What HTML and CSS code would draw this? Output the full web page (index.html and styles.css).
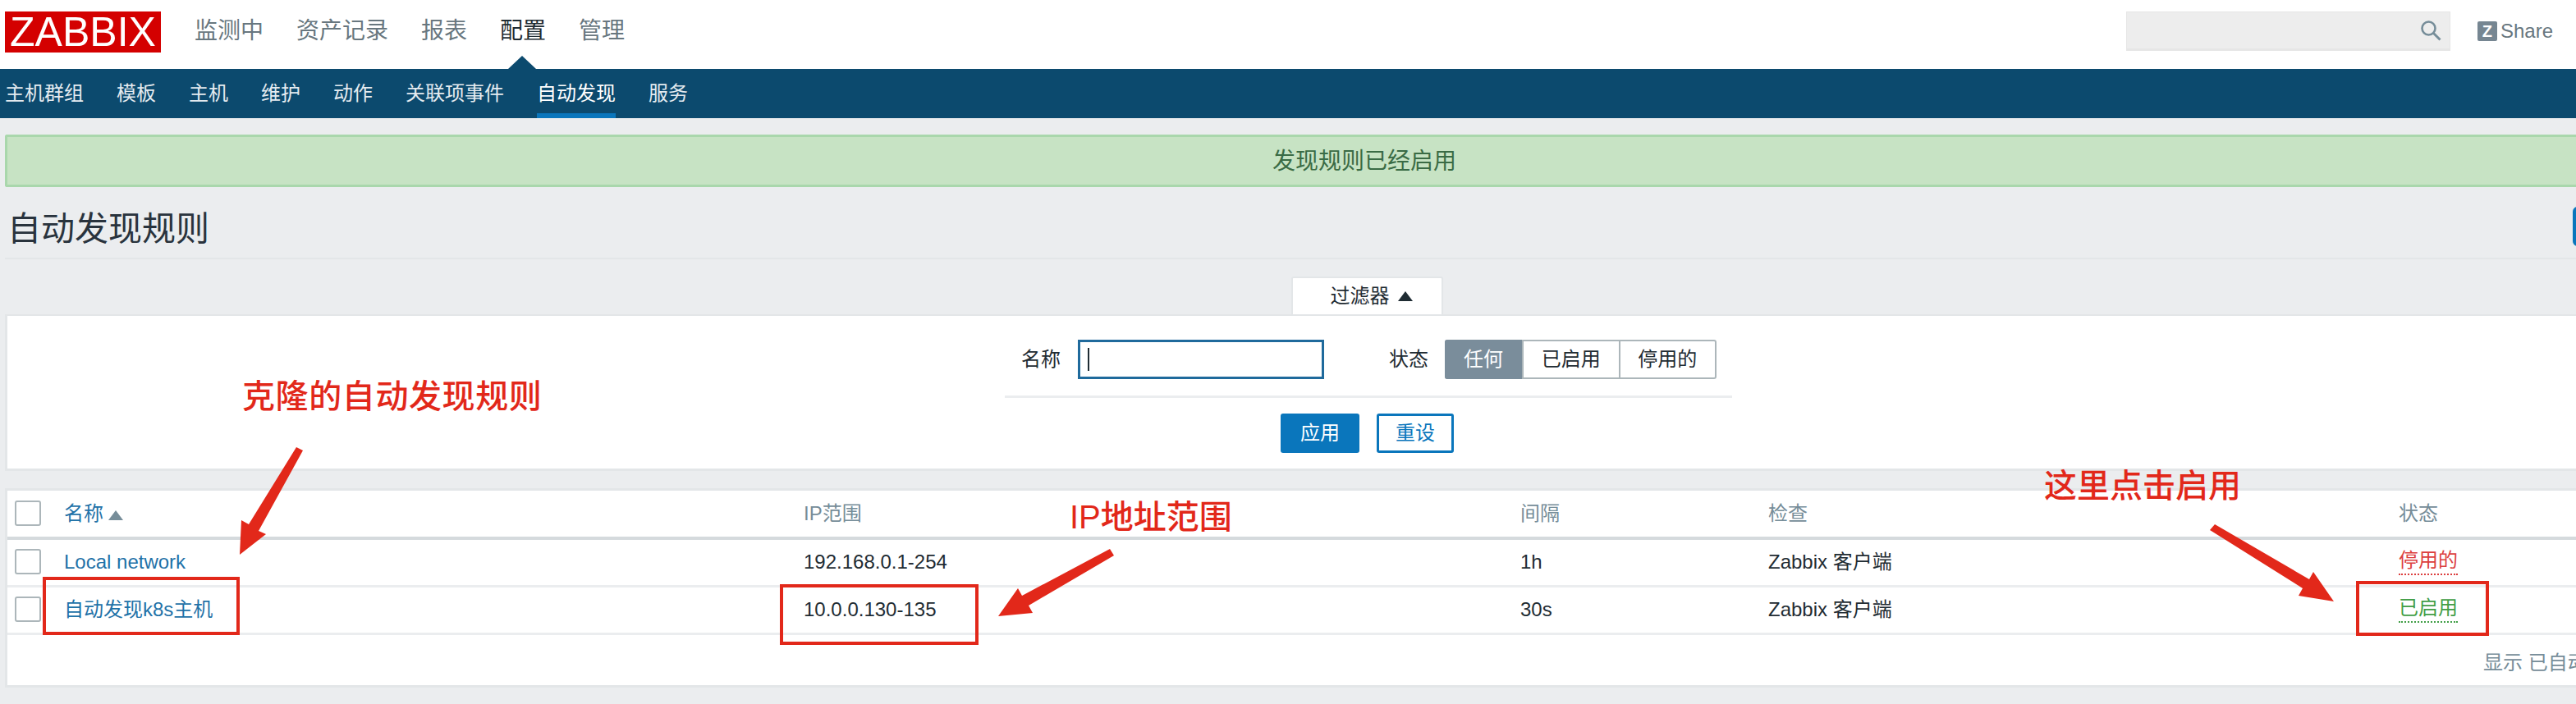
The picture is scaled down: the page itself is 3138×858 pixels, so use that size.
FILE: index.html
```html
<!DOCTYPE html>
<html lang="zh">
<head>
<meta charset="utf-8">
<title>自动发现规则</title>
<link rel="stylesheet" href="styles.css">
</head>
<body>
<header class="topbar">
  <div class="logo">ZABBIX</div>
  <nav class="topnav">
    <a>监测中</a><a>资产记录</a><a>报表</a><a class="on">配置</a><a>管理</a>
  </nav>
  <div class="search">
    <svg class="search-ico" width="26" height="26" viewBox="0 0 26 26"><circle cx="10.5" cy="10.5" r="8" fill="none" stroke="#768d99" stroke-width="2.6"/><path d="M16.5 16.5L24.5 24.5" stroke="#768d99" stroke-width="3"/></svg>
  </div>
  <a class="share"><span class="zmark">Z</span>Share</a>
</header>
<nav class="subnav">
  <a>主机群组</a><a>模板</a><a>主机</a><a>维护</a><a>动作</a><a>关联项事件</a><a class="on">自动发现</a><a>服务</a>
</nav>
<main class="main">
  <div class="msg">发现规则已经启用</div>
  <div class="titlebar">
    <h1>自动发现规则</h1>
    <span class="create"></span>
  </div>
  <div class="tabrow"><div class="tab">过滤器<span class="tri"></span></div></div>
  <section class="filter">
    <div class="frow">
      <label class="flabel">名称</label>
      <div class="finput"><span class="caret"></span></div>
      <label class="flabel second">状态</label>
      <div class="seg"><span class="sel">任何</span><span>已启用</span><span>停用的</span></div>
    </div>
    <div class="fbtns"><button class="btn primary">应用</button><button class="btn ghost">重设</button></div>
  </section>
  <section class="list">
    <table>
      <colgroup><col class="c0"><col class="c1"><col class="c2"><col class="c3"><col class="c4"><col class="c5"></colgroup>
      <thead>
        <tr><th><span class="cb"></span></th><th><a class="link">名称</a><span class="sort"></span></th><th>IP范围</th><th>间隔</th><th>检查</th><th>状态</th></tr>
      </thead>
      <tbody>
        <tr><td><span class="cb"></span></td><td><a class="link">Local network</a></td><td>192.168.0.1-254</td><td>1h</td><td>Zabbix 客户端</td><td><a class="st off">停用的</a></td></tr>
        <tr><td><span class="cb"></span></td><td><a class="link">自动发现k8s主机</a></td><td>10.0.0.130-135</td><td>30s</td><td>Zabbix 客户端</td><td><a class="st ok">已启用</a></td></tr>
      </tbody>
    </table>
    <div class="foot">显示 已自动发现 2 中的 2</div>
  </section>
</main>
<div class="notes">
  <svg class="notes-svg" width="3138" height="858" viewBox="0 0 3138 858">
    <g fill="#e2281a">
      <polygon points="361,545 369,549 315,647 324,651 292,676 294,634 303,639"/>
      <polygon points="1352,669 1357,677 1253,738 1258,747 1216,751 1240,717 1245,726"/>
      <polygon points="2692,646 2698,639 2813,706 2818,697 2843,733 2800,726 2805,717"/>
    </g>
    <g fill="none" stroke="#e2281a" stroke-width="4">
      <rect x="54" y="705" width="236" height="67"/>
      <rect x="952" y="714" width="238" height="70"/>
      <rect x="2872" y="710" width="158" height="63"/>
    </g>
  </svg>
  <div class="note n1">克隆的自动发现规则</div>
  <div class="note n2">IP地址范围</div>
  <div class="note n3">这里点击启用</div>
</div>
</body>
</html>
```
FILE: styles.css
```css
* { box-sizing: border-box; }
html, body { margin: 0; height: 858px; overflow: hidden; }
body {
  position: relative;
  width: 3138px;
  background: #ebedef;
  color: #1f2c33;
  font: 24px/1.2 "Liberation Sans", "Noto Sans CJK SC", sans-serif;
}
a { color: inherit; text-decoration: none; }

.topbar {
  display: flex;
  align-items: center;
  height: 84px;
  background: #fff;
  padding: 0 28px 0 6px;
}
.logo {
  width: 190px;
  height: 50px;
  margin-bottom: 6px;
  background: #d40000;
  color: #fff;
  font-size: 50px;
  line-height: 50px;
  text-align: center;
}
.topnav { display: flex; gap: 40px; margin: 0 0 8px 41px; font-size: 28px; color: #68777f; }
.topnav .on { position: relative; color: #1f2c33; }
.topnav .on::after {
  content: "";
  position: absolute;
  left: 10px;
  top: 47px;
  border: 17px solid transparent;
  border-top: 0;
  border-bottom: 16px solid #0c4a6e;
}
.search {
  display: flex;
  align-items: center;
  justify-content: flex-end;
  width: 395px;
  height: 48px;
  margin: 0 0 8px auto;
  padding-right: 10px;
  background: #ededed;
  border: 1px solid #e6e6e6;
  border-bottom-width: 3px;
}
.search-ico { display: block; }
.share { display: flex; align-items: center; margin: 0 0 8px 33px; color: #68777f; }
.zmark {
  width: 24px;
  height: 24px;
  margin-right: 4px;
  border-radius: 2px;
  background: #768692;
  color: #fff;
  font-weight: 700;
  font-size: 20px;
  line-height: 24px;
  text-align: center;
}

.subnav {
  display: flex;
  gap: 40px;
  height: 60px;
  padding-left: 6px;
  background: #0c4a6e;
  color: #e4ebf0;
}
.subnav a { line-height: 60px; height: 60px; }
.subnav .on { color: #fff; border-bottom: 6px solid #0a76bc; }

.main { width: 3400px; padding: 20px 0 0 6px; }
.msg {
  height: 64px;
  background: #c7e3c4;
  border: solid #a9d7ac;
  border-width: 3px 0 3px 3px;
  border-radius: 3px 0 0 3px;
  color: #3a6b45;
  font-size: 28px;
  line-height: 60px;
  padding-left: 1541px;
}
.titlebar {
  display: flex;
  justify-content: space-between;
  height: 88px;
  border-bottom: 2px solid #e3e6e8;
  padding: 27px 0 0;
}
.titlebar h1 { margin: 0; font-size: 41px; line-height: 48px; font-weight: 400; padding-left: 3px; color: #29333d; }
.create { width: 266px; height: 48px; margin-top: -3px; border-radius: 6px 0 0 6px; background: #0a76bc; }
.tabrow { display: flex; padding: 21px 0 0 1567px; }
.tab {
  display: flex;
  align-items: center;
  justify-content: center;
  width: 185px;
  height: 46px;
  padding-left: 10px;
  background: #fff;
  border: solid #e3e6e8;
  border-width: 2px 2px 0;
  border-radius: 3px 3px 0 0;
}
.tri {
  margin-left: 10px;
  border: 9px solid transparent;
  border-top: 0;
  border-bottom: 12px solid #1f2c33;
}
.filter {
  height: 191px;
  background: #fff;
  border: solid #e3e6e8;
  border-width: 2px 0 3px 3px;
  padding-top: 29px;
}
.frow {
  display: flex;
  align-items: center;
  width: 886px;
  height: 71px;
  margin-left: 1215px;
  padding: 0 0 20px 20px;
  border-bottom: 3px solid #ebedef;
}
.flabel { margin-right: 21px; }
.flabel.second { margin: 0 20px 0 79px; }
.finput {
  display: flex;
  align-items: center;
  width: 300px;
  height: 48px;
  padding-left: 9px;
  border: 3px solid #1f6a9c;
}
.caret { width: 2px; height: 28px; background: #1f2c33; }
.seg {
  display: flex;
  width: 331px;
  height: 48px;
  border: 2px solid #acb6ba;
  border-radius: 3px;
}
.seg span { flex: 1 1 0; text-align: center; line-height: 44px; border-left: 2px solid #acb6ba; }
.seg span:first-child { border-left: 0; flex: 0 0 94px; }
.seg .sel { margin: -2px 0 -2px -2px; line-height: 48px; background: #7a8d9b; color: #fff; border-radius: 3px 0 0 3px; flex: 0 0 96px; }
.fbtns { display: flex; gap: 21px; margin: 19px 0 0 1551px; }
.btn {
  width: 96px;
  height: 48px;
  padding: 0;
  border-radius: 3px;
  font: inherit;
}
.btn.primary { background: #0a76bc; border: 0; color: #fff; }
.btn.ghost { width: 94px; background: #fff; border: 3px solid #0a76bc; color: #0a76bc; }

.list {
  height: 243px;
  margin-top: 21px;
  background: #fff;
  border: solid #e3e6e8;
  border-width: 3px 0 3px 3px;
}
table { border-collapse: collapse; table-layout: fixed; width: 3391px; }
.c0 { width: 69px; } .c1 { width: 901px; } .c2 { width: 873px; } .c3 { width: 302px; } .c4 { width: 768px; } .c5 { width: 478px; }
th, td { padding: 0; text-align: left; font-weight: 400; }
th { height: 58px; color: #768d99; border-bottom: 4px solid #d5dadd; }
td { height: 58px; border-bottom: 3px solid #ebedef; }
.cb {
  display: block;
  width: 32px;
  height: 31px;
  margin: 0 0 2px 9px;
  background: #fff;
  border: 2px solid #acb6ba;
  border-radius: 3px;
}
.link { color: #1f72a8; }
.sort {
  display: inline-block;
  margin-left: 6px;
  border: 9px solid transparent;
  border-top: 0;
  border-bottom: 12px solid #768d99;
}
.st { display: inline-block; padding-bottom: 1px; border-bottom: 2px dotted; }
.st.off { color: #dc3f3f; }
.st.ok { color: #429e47; }
.foot { padding: 20px 0 0 3016px; color: #768d99; }

.notes { position: absolute; left: 0; top: 0; width: 3138px; height: 858px; pointer-events: none; }
.notes-svg { display: block; }
.note { position: absolute; color: #e2281a; font-size: 40px; font-weight: 500; line-height: 48px; white-space: nowrap; }
.n1 { left: 295px; top: 459px; letter-spacing: .6px; }
.n2 { left: 1303px; top: 606px; }
.n3 { left: 2490px; top: 568px; }
```
